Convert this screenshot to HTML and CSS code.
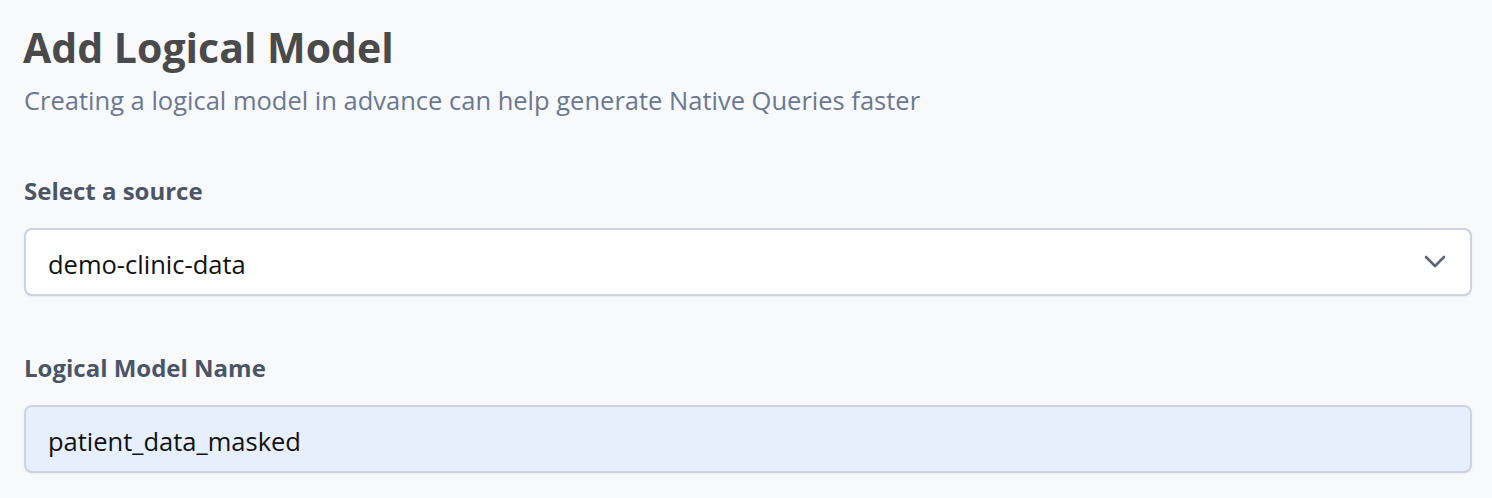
FILE: index.html
```html
<!DOCTYPE html>
<html>
<head>
<meta charset="utf-8">
<link rel="stylesheet" href="styles.css">
</head>
<body>
<main class="page">
  <header class="head">
    <h1 class="title">Add Logical Model</h1>
    <p class="subtitle">Creating a logical model in advance can help generate Native Queries faster</p>
  </header>
  <section class="field">
    <label class="label">Select a source</label>
    <div class="select">
      <span class="value">demo-clinic-data</span>
      <svg class="chev" width="22" height="14" viewBox="0 0 22 14"><path d="M2 2 L11 11 L20 2" fill="none" stroke="#5b6579" stroke-width="2.6" stroke-linecap="round" stroke-linejoin="round"/></svg>
    </div>
  </section>
  <section class="field">
    <label class="label">Logical Model Name</label>
    <div class="input">
      <span class="value">patient_data_masked</span>
    </div>
  </section>
</main>
</body>
</html>
```
FILE: styles.css
```css
html, body { margin: 0; padding: 0; }
body {
  background: #f8f9fb;
  font-family: "Open Sans", "Noto Sans", sans-serif;
  width: 1492px;
  height: 498px;
  overflow: hidden;
}
.page { padding: 22px 20px 0 24px; display: flex; flex-direction: column; }
.title {
  margin: 0;
  font-size: 41px;
  font-weight: 700;
  color: #4a4a4a;
  line-height: 50px;
  margin-left: -1px;
}
.subtitle {
  margin: 12px 0 0;
  font-size: 25.5px;
  color: #6b7890;
  line-height: 32px;
}
.field { display: flex; flex-direction: column; margin-top: 60px; }
.field + .field { margin-top: 57px; }
.label {
  font-size: 24px;
  font-weight: 700;
  color: #4b5566;
  line-height: 30px;
  margin-bottom: 22px;
}
.select, .input {
  box-sizing: border-box;
  height: 68px;
  border: 2px solid #ccd3df;
  border-radius: 8px;
  display: flex;
  align-items: center;
  padding: 3px 22px 0;
  font-size: 25.5px;
  color: #111;
  box-shadow: 0 1px 2px rgba(20,30,50,0.06);
}
.select { background: #fff; justify-content: space-between; padding-right: 24px; }
.chev { margin-top: -3px; }
.input { background: #e8effc; }
```
